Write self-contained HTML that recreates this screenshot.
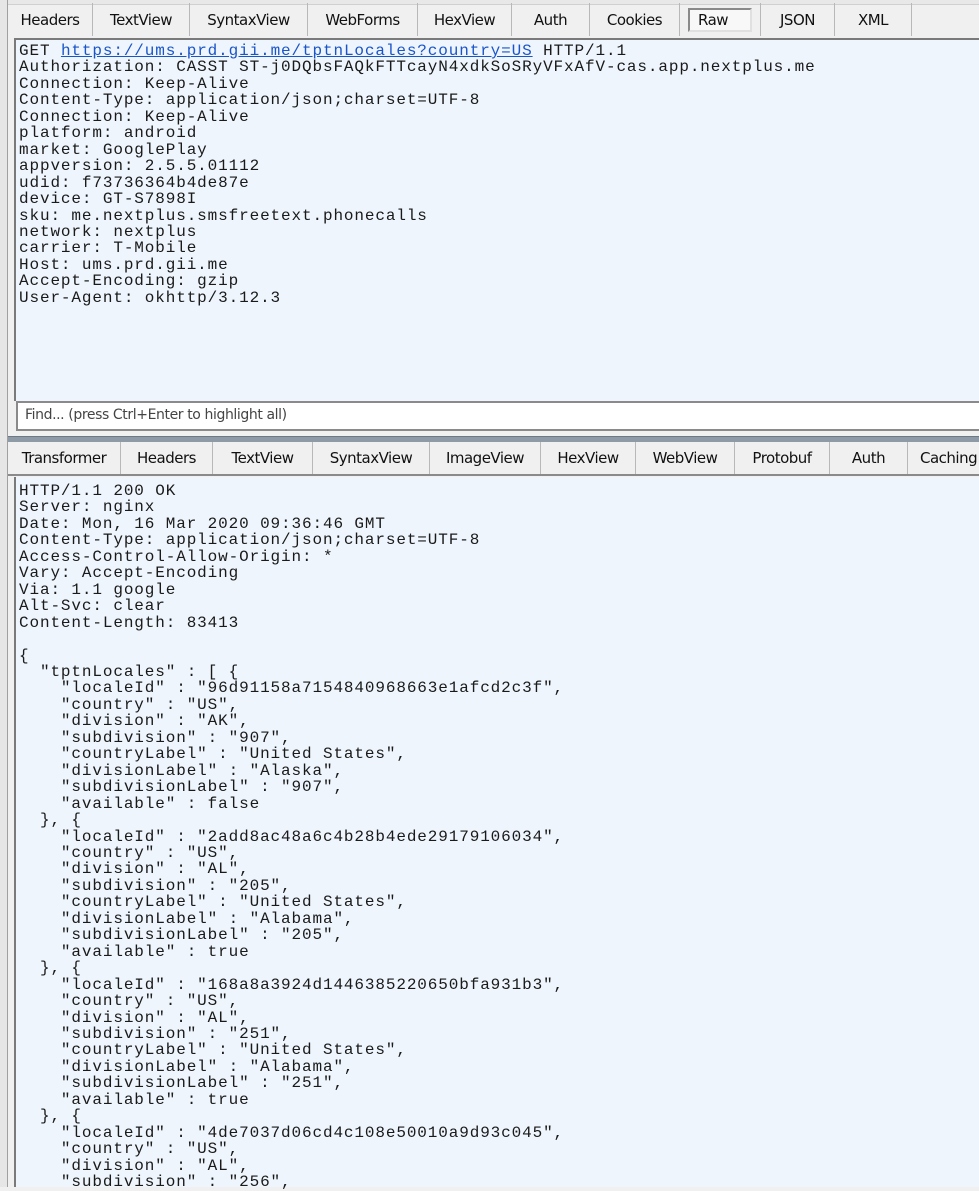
<!DOCTYPE html>
<html><head><meta charset="utf-8"><style>
*{margin:0;padding:0;box-sizing:border-box}
body{width:979px;height:1187px;overflow:hidden;background:#f0f0f0;position:relative;font-family:"DejaVu Sans","Liberation Sans",sans-serif}
.strip{position:absolute;left:0;top:0;width:8px;height:1187px;background:#e6e6e6;border-right:1px solid #a0a0a0}
.topline{position:absolute;left:8px;top:0;right:0;height:5px;background:#e8e8e8;border-bottom:1px solid #d0d0d0}
.tabs{position:absolute;left:8px;right:0;height:33px}
.tab{position:absolute;top:0;height:100%;font-size:15px;color:#111;letter-spacing:-0.5px;display:flex;align-items:center;justify-content:center;border-right:1px solid #b8b8b8}
.tab.sel span{border:2px solid #8a8a8a;border-right-color:#e0e0e0;border-bottom-color:#e0e0e0;background:#f8f8f8;padding:1px 8px;width:64px;display:block}
.area{position:absolute;left:14px;right:0;background:#eef5fd;border-left:2px solid #7a7a7a;border-top:2px solid #7a7a7a}
pre{font-family:"Liberation Mono",monospace;font-size:16px;letter-spacing:0.88px;line-height:16.45px;color:#1a1a1a;padding:3px 0 0 3px}
a{color:#1a55c8;text-decoration:underline}
.find{position:absolute;left:16px;top:401px;right:0;height:30px;background:#fff;border:2px solid #8a8a8a;border-right:none;font-size:14px;color:#444;padding:4px 0 0 7px;letter-spacing:-0.4px}
.sep{position:absolute;left:8px;right:0;top:436px;height:6px;background:#8e9aa6;border-top:1px solid #6c7884}
</style></head><body>
<div class="strip"></div>
<div class="topline"></div>
<div class="tabs" style="top:3px">
<div class="tab" style="left:0;width:85px">Headers</div>
<div class="tab" style="left:85px;width:97px">TextView</div>
<div class="tab" style="left:182px;width:118px">SyntaxView</div>
<div class="tab" style="left:300px;width:110px">WebForms</div>
<div class="tab" style="left:410px;width:94px">HexView</div>
<div class="tab" style="left:504px;width:78px">Auth</div>
<div class="tab" style="left:582px;width:90px">Cookies</div>
<div class="tab sel" style="left:672px;width:80px;border-right:none"><span>Raw</span></div>
<div class="tab" style="left:752px;width:75px;border-left:1px solid #b8b8b8">JSON</div>
<div class="tab" style="left:827px;width:77px">XML</div>
</div>
<div class="area" style="top:38px;height:363px">
<pre>GET <a>https://ums.prd.gii.me/tptnLocales?country=US</a> HTTP/1.1
Authorization: CASST ST-j0DQbsFAQkFTTcayN4xdkSoSRyVFxAfV-cas.app.nextplus.me
Connection: Keep-Alive
Content-Type: application/json;charset=UTF-8
Connection: Keep-Alive
platform: android
market: GooglePlay
appversion: 2.5.5.01112
udid: f73736364b4de87e
device: GT-S7898I
sku: me.nextplus.smsfreetext.phonecalls
network: nextplus
carrier: T-Mobile
Host: ums.prd.gii.me
Accept-Encoding: gzip
User-Agent: okhttp/3.12.3</pre>
</div>
<div class="find">Find... (press Ctrl+Enter to highlight all)</div>
<div class="sep"></div>
<div class="tabs" style="top:442px;border-bottom:2px solid #8a8a8a;height:34px">
<div class="tab" style="left:0;width:113px">Transformer</div>
<div class="tab" style="left:113px;width:92px">Headers</div>
<div class="tab" style="left:205px;width:100px">TextView</div>
<div class="tab" style="left:305px;width:117px">SyntaxView</div>
<div class="tab" style="left:422px;width:111px">ImageView</div>
<div class="tab" style="left:533px;width:95px">HexView</div>
<div class="tab" style="left:628px;width:99px">WebView</div>
<div class="tab" style="left:727px;width:95px">Protobuf</div>
<div class="tab" style="left:822px;width:78px">Auth</div>
<div class="tab" style="left:900px;width:90px;justify-content:flex-start;padding-left:12px">Caching</div>
</div>
<div class="area" style="top:477px;height:710px;border-top:none">
<pre style="padding-top:6px">HTTP/1.1 200 OK
Server: nginx
Date: Mon, 16 Mar 2020 09:36:46 GMT
Content-Type: application/json;charset=UTF-8
Access-Control-Allow-Origin: *
Vary: Accept-Encoding
Via: 1.1 google
Alt-Svc: clear
Content-Length: 83413

{
  "tptnLocales" : [ {
    "localeId" : "96d91158a7154840968663e1afcd2c3f",
    "country" : "US",
    "division" : "AK",
    "subdivision" : "907",
    "countryLabel" : "United States",
    "divisionLabel" : "Alaska",
    "subdivisionLabel" : "907",
    "available" : false
  }, {
    "localeId" : "2add8ac48a6c4b28b4ede29179106034",
    "country" : "US",
    "division" : "AL",
    "subdivision" : "205",
    "countryLabel" : "United States",
    "divisionLabel" : "Alabama",
    "subdivisionLabel" : "205",
    "available" : true
  }, {
    "localeId" : "168a8a3924d1446385220650bfa931b3",
    "country" : "US",
    "division" : "AL",
    "subdivision" : "251",
    "countryLabel" : "United States",
    "divisionLabel" : "Alabama",
    "subdivisionLabel" : "251",
    "available" : true
  }, {
    "localeId" : "4de7037d06cd4c108e50010a9d93c045",
    "country" : "US",
    "division" : "AL",
    "subdivision" : "256",</pre>
</div>
</body></html>
